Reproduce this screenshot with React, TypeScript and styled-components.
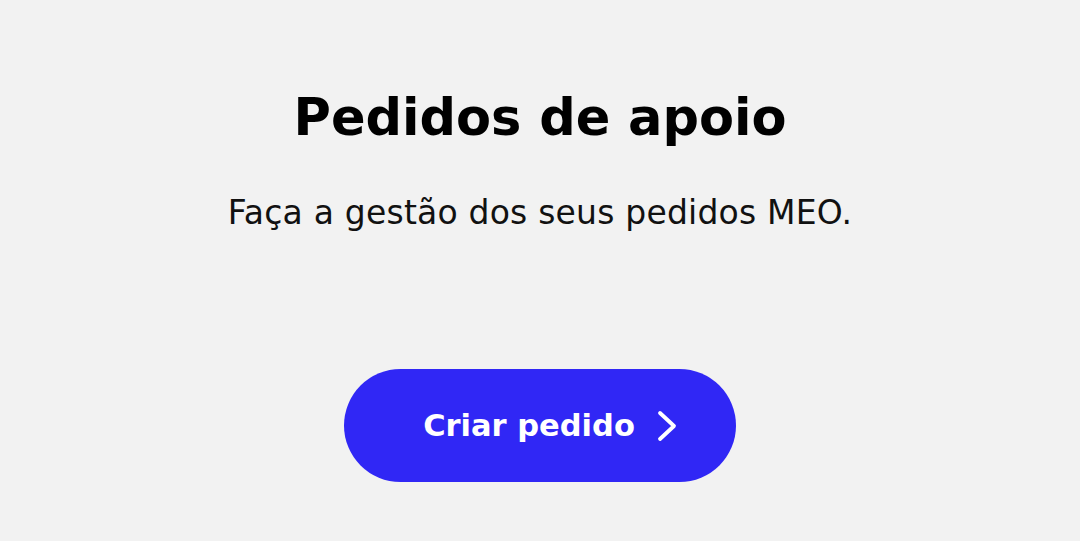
import React from 'react';
import styled, { createGlobalStyle } from 'styled-components';

const GlobalStyle = createGlobalStyle`
  html, body {
    margin: 0;
    padding: 0;
    background: #f2f2f2;
  }
  body {
    font-family: "DejaVu Sans", "Noto Sans", sans-serif;
    -webkit-font-smoothing: antialiased;
  }
`;

const Page = styled.main`
  width: 1080px;
  height: 541px;
  display: flex;
  flex-direction: column;
  align-items: center;
  padding-top: 83px;
  box-sizing: border-box;
  background: #f2f2f2;
  color: #000;
`;

const Title = styled.h1`
  margin: 0;
  font-size: 51px;
  line-height: 70px;
  font-weight: 700;
  letter-spacing: 0;
`;

const Subtitle = styled.p`
  margin: 38px 0 0;
  font-size: 33px;
  line-height: 44px;
  font-weight: 400;
  letter-spacing: 0.2px;
  color: #111;
`;

const CreateButton = styled.button`
  margin-top: 134px;
  width: 392px;
  height: 113px;
  border: none;
  border-radius: 57px;
  background: #3027f5;
  color: #fff;
  display: flex;
  align-items: center;
  justify-content: center;
  gap: 20px;
  padding: 0 0 0 22px;
  font-family: inherit;
  font-size: 30.5px;
  font-weight: 700;
  cursor: pointer;
`;

const Chevron = () => (
  <svg width="24" height="32" viewBox="0 0 24 32" fill="none">
    <path d="M5 3 L19 16 L5 29" stroke="#fff" strokeWidth="3.8" strokeLinecap="round" strokeLinejoin="round" />
  </svg>
);

const App: React.FC = () => {
  return (
    <>
      <GlobalStyle />
      <Page>
        <Title>Pedidos de apoio</Title>
        <Subtitle>Faça a gestão dos seus pedidos MEO.</Subtitle>
        <CreateButton>
          Criar pedido
          <Chevron />
        </CreateButton>
      </Page>
    </>
  );
};

export default App;
